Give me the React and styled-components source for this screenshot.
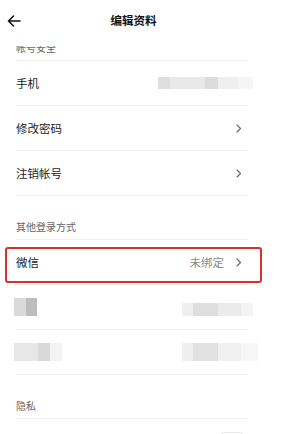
import styled, { createGlobalStyle } from 'styled-components';

const GlobalStyle = createGlobalStyle`
  html, body {
    margin: 0;
    padding: 0;
    background: #ffffff;
    overflow: hidden;
  }
  body {
    font-family: "Noto Sans CJK SC", "Noto Sans", sans-serif;
    color: #1a1a1a;
  }
`;

const Screen = styled.div`
  width: 283px;
  height: 434px;
  display: flex;
  flex-direction: column;
  overflow: hidden;
  background: #fff;
`;

const Header = styled.div`
  flex-shrink: 0;
  height: 46px;
  box-sizing: border-box;
  padding-bottom: 4px;
  display: grid;
  grid-template-columns: 36px 1fr 52px;
  align-items: center;
  background: #fff;
  position: relative;
  z-index: 1;
`;

const BackButton = styled.div`
  display: flex;
  align-items: center;
  padding-left: 7px;
  height: 100%;
`;

const Title = styled.div`
  text-align: center;
  font-size: 11.5px;
  font-weight: 700;
  line-height: 1;
  color: #111;
`;

const Scroll = styled.div`
  flex: 1;
  overflow: hidden;
`;

const Content = styled.div`
  margin-top: -29px;
  padding: 0 35px 0 16px;
`;

const SectionTitle = styled.div`
  height: 44px;
  box-sizing: border-box;
  padding-top: 24px;
  font-size: 10px;
  line-height: 14px;
  color: #666;
  border-bottom: 1px solid #f0f0f0;
`;

const Row = styled.div`
  position: relative;
  height: 44px;
  display: flex;
  align-items: center;
  justify-content: space-between;
  border-bottom: 1px solid ${(p) => (p.$noLine ? 'transparent' : '#f0f0f0')};
`;

const Label = styled.span`
  font-size: 11.5px;
  color: #1a1a1a;
`;

const Right = styled.div`
  display: flex;
  align-items: center;
  gap: 12px;
  padding-right: 6px;
`;

const Value = styled.span`
  font-size: 11.5px;
  color: #8a8a8a;
`;

const Mosaic = styled.div`
  display: flex;
  height: ${(p) => p.$h}px;
  margin-left: ${(p) => p.$ml || 0}px;
  margin-right: ${(p) => p.$mr || 0}px;
  margin-top: ${(p) => p.$mt || 0}px;
`;

const Cell = styled.div`
  width: ${(p) => p.$w}px;
  background: ${(p) => p.$c};
`;

const Highlight = styled.div`
  position: absolute;
  left: -11px;
  right: -14px;
  top: 7px;
  bottom: 1px;
  border: 2.5px solid #d9312d;
  border-radius: 3px;
  pointer-events: none;
`;

const Toggle = styled.div`
  width: 26px;
  height: 16px;
  border-radius: 8px;
  border: 1px solid #e6e6e6;
  margin-right: 2px;
`;

const Chevron = () => (
  <svg width="6" height="9" viewBox="0 0 6 9" fill="none">
    <path d="M1 1l3.5 3.5L1 8" stroke="#666" strokeWidth="1.1" strokeLinecap="round" strokeLinejoin="round" />
  </svg>
);

const BackArrow = () => (
  <svg width="14" height="12" viewBox="0 0 14 12" fill="none">
    <path d="M13 6H1.5M6.5 1L1.5 6l5 5" stroke="#111" strokeWidth="1.6" strokeLinecap="round" strokeLinejoin="round" />
  </svg>
);

const mosaic = (cells, h, rest) => (
  <Mosaic $h={h} {...rest}>
    {cells.map(([w, c], i) => (
      <Cell key={i} $w={w} $c={c} />
    ))}
  </Mosaic>
);

export default function App() {
  return (
    <>
      <GlobalStyle />
      <Screen>
        <Header>
          <BackButton>
            <BackArrow />
          </BackButton>
          <Title>编辑资料</Title>
          <div />
        </Header>
        <Scroll>
          <Content>
            <SectionTitle>帐号安全</SectionTitle>
            <Row>
              <Label>手机</Label>
              {mosaic(
                [
                  [12, '#dedede'],
                  [35, '#e9e9e9'],
                  [13, '#dcdcdc'],
                  [20, '#efefef'],
                  [15, '#f5f5f5'],
                ],
                12,
                { $mr: -5 }
              )}
            </Row>
            <Row>
              <Label>修改密码</Label>
              <Right>
                <Chevron />
              </Right>
            </Row>
            <Row>
              <Label>注销帐号</Label>
              <Right>
                <Chevron />
              </Right>
            </Row>
            <SectionTitle>其他登录方式</SectionTitle>
            <Row>
              <Label>微信</Label>
              <Right>
                <Value>未绑定</Value>
                <Chevron />
              </Right>
              <Highlight />
            </Row>
            <Row>
              {mosaic(
                [
                  [12, '#dadada'],
                  [11, '#bdbdbd'],
                ],
                18,
                { $ml: -2 }
              )}
              {mosaic(
                [
                  [11, '#efefef'],
                  [25, '#dedede'],
                  [23, '#ebebeb'],
                  [12, '#f4f4f4'],
                ],
                13,
                { $mr: -5, $mt: 5 }
              )}
            </Row>
            <Row>
              {mosaic(
                [
                  [24, '#e7e7e7'],
                  [12, '#d9d9d9'],
                  [12, '#f3f3f3'],
                ],
                18,
                { $ml: -2 }
              )}
              {mosaic(
                [
                  [11, '#efefef'],
                  [25, '#e1e1e1'],
                  [23, '#f0f0f0'],
                  [17, '#f6f6f6'],
                ],
                18,
                { $mr: -10 }
              )}
            </Row>
            <SectionTitle>隐私</SectionTitle>
            <Row $noLine>
              <Label />
              <Toggle />
            </Row>
          </Content>
        </Scroll>
      </Screen>
    </>
  );
}
